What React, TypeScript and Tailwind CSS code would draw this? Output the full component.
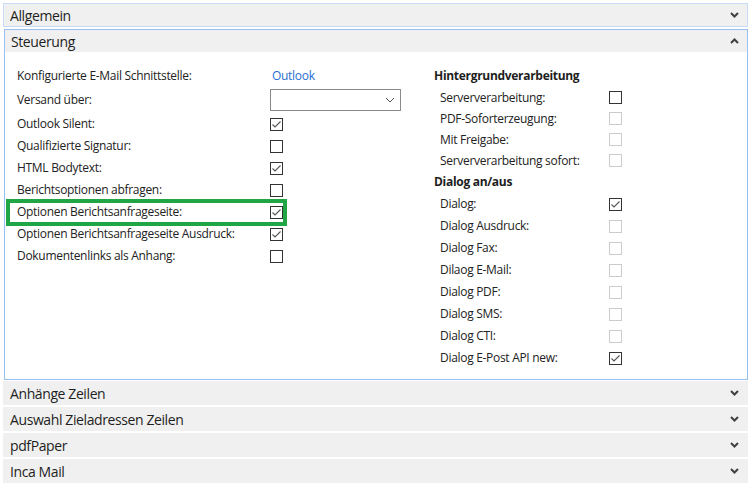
import React from "react";

const FONT = { fontFamily: '"Open Sans", "Noto Sans", Arial, sans-serif' };

function Chevron({ up = false }: { up?: boolean }) {
  return (
    <svg width="9" height="6" viewBox="0 0 9 6" className="text-[#404040]">
      <path
        d={up ? "M1 5 L4.5 1.5 L8 5" : "M1 1 L4.5 4.5 L8 1"}
        fill="none"
        stroke="currentColor"
        strokeWidth="2"
      />
    </svg>
  );
}

function Check({ checked = false, disabled = false }: { checked?: boolean; disabled?: boolean }) {
  return (
    <div
      className={
        "w-[13px] h-[13px] border bg-white flex items-center justify-center " +
        (disabled ? "border-[#cccccc]" : "border-[#333333]")
      }
    >
      {checked && (
        <svg width="11" height="11" viewBox="0 0 11 11">
          <path d="M1.5 5.5 L4 8 L9.5 2.5" fill="none" stroke="#555555" strokeWidth="1.1" />
        </svg>
      )}
    </div>
  );
}

function Header({ title, up = false }: { title: string; up?: boolean }) {
  return (
    <div className="h-[22px] bg-[#f0f0f0] flex items-center justify-between pl-[6px] pr-[8px] text-[14px] tracking-[-0.4px] text-[#1e1e1e]">
      <span>{title}</span>
      <Chevron up={up} />
    </div>
  );
}

const LEFT = [
  { label: "Outlook Silent:", checked: true },
  { label: "Qualifizierte Signatur:", checked: false },
  { label: "HTML Bodytext:", checked: true },
  { label: "Berichtsoptionen abfragen:", checked: false },
  { label: "Optionen Berichtsanfrageseite:", checked: true, hl: true },
  { label: "Optionen Berichtsanfrageseite Ausdruck:", checked: true },
  { label: "Dokumentenlinks als Anhang:", checked: false },
];

const SERVER = [
  { label: "Serververarbeitung:", disabled: false },
  { label: "PDF-Soforterzeugung:", disabled: true },
  { label: "Mit Freigabe:", disabled: true },
  { label: "Serververarbeitung sofort:", disabled: true },
];

const DIALOG = [
  { label: "Dialog:", checked: true, disabled: false },
  { label: "Dialog Ausdruck:", checked: false, disabled: true },
  { label: "Dialog Fax:", checked: false, disabled: true },
  { label: "Dilaog E-Mail:", checked: false, disabled: true },
  { label: "Dialog PDF:", checked: false, disabled: true },
  { label: "Dialog SMS:", checked: false, disabled: true },
  { label: "Dialog CTI:", checked: false, disabled: true },
  { label: "Dialog E-Post API new:", checked: true, disabled: false },
];

export default function App() {
  return (
    <div style={FONT} className="w-[751px] h-[483px] bg-white pt-[3px] pl-[3px] pr-[3px] overflow-hidden">
      {/* Allgemein (collapsed) */}
      <div className="border border-[#c9dcf6]">
        <Header title="Allgemein" />
      </div>

      {/* Steuerung (expanded) */}
      <div className="mt-[2px] ml-[1px] border border-[#98bff2] h-[351px] flex flex-col">
        <Header title="Steuerung" up />
        <div className="flex pt-[13px] text-[12px] tracking-[-0.3px] text-[#222222]">
          {/* left column */}
          <div className="w-[416px] pl-[12px] flex flex-col">
            <div className="h-[22px] flex items-center">
              <span className="w-[255px]">Konfigurierte E-Mail Schnittstelle:</span>
              <span className="text-[#1f6fd1]">Outlook</span>
            </div>
            <div className="h-[26px] flex items-center">
              <span className="w-[253px]">Versand über:</span>
              <div className="w-[131px] h-[22px] border border-[#8a8a8a] bg-white flex items-center justify-end pr-[5px]">
                <svg width="10" height="6" viewBox="0 0 10 6">
                  <path d="M1 1 L5 5 L9 1" fill="none" stroke="#555555" strokeWidth="1" />
                </svg>
              </div>
            </div>
            {LEFT.map((r) => (
              <div key={r.label} className="h-[22px] flex items-center relative">
                {r.hl && (
                  <div className="absolute left-[-11px] top-[-2px] w-[281px] h-[27px] border-[4px] border-[#21a645]" />
                )}
                <span className="w-[253px]">{r.label}</span>
                <Check checked={r.checked} />
              </div>
            ))}
          </div>

          {/* right column */}
          <div className="flex flex-col pl-[13px]">
            <div className="h-[22px] flex items-center font-bold text-[#1e1e1e]">Hintergrundverarbeitung</div>
            {SERVER.map((r) => (
              <div key={r.label} className="h-[21px] flex items-center pl-[6px]">
                <span className="w-[169px]">{r.label}</span>
                <Check disabled={r.disabled} />
              </div>
            ))}
            <div className="h-[22px] flex items-center font-bold text-[#1e1e1e]">Dialog an/aus</div>
            {DIALOG.map((r) => (
              <div key={r.label} className="h-[22px] flex items-center pl-[6px]">
                <span className="w-[169px]">{r.label}</span>
                <Check checked={r.checked} disabled={r.disabled} />
              </div>
            ))}
          </div>
        </div>
      </div>

      {/* collapsed sections */}
      <div className="mt-[1px] flex flex-col gap-[2px]">
        {["Anhänge Zeilen", "Auswahl Zieladressen Zeilen", "pdfPaper", "Inca Mail"].map((t) => (
          <div key={t} className="h-[24px] bg-[#f0f0f0] flex items-center justify-between pl-[7px] pr-[9px] text-[14px] tracking-[-0.4px] text-[#1e1e1e]">
            <span>{t}</span>
            <Chevron />
          </div>
        ))}
      </div>
    </div>
  );
}
